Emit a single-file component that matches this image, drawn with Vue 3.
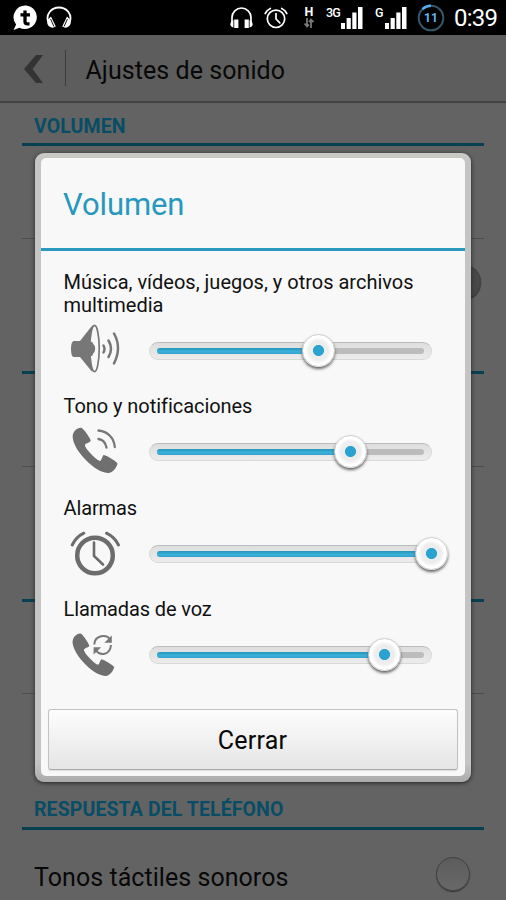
<script setup>
const channels = [
  { name: 'Música, vídeos, juegos, y otros archivos multimedia', icon: 'speaker', level: 59.7, spacing: 'wide' },
  { name: 'Tono y notificaciones', icon: 'ring', level: 71.2, spacing: 'tight' },
  { name: 'Alarmas', icon: 'alarm', level: 99.7, spacing: 'tighter' },
  { name: 'Llamadas de voz', icon: 'call', level: 83.1, spacing: 'tighter' },
]
const handset = 'M9.2 7.8C6.5 8.8 3.8 11.5 3.4 15.6C3 19.8 6.4 29.4 16 39C25 48 31.2 51.6 38.4 52.4C43.3 52.9 47.2 47 48.2 43.2C48.2 41.6 37.6 35.2 34.6 34.6C33.4 34.4 32.6 39.2 31.2 40.3C29.2 41.8 14.4 27 15.7 24.2C16.5 22.5 21.5 21.7 21.4 20.2C21.1 17.8 15.2 9.4 12.8 7.7C11.7 6.9 10.4 7.3 9.2 7.8Z'
</script>

<template>
  <div class="screen">
    <header class="status">
      <svg class="chat" viewBox="0 0 25 26">
        <path d="M13 .5A11.800 11.800 0 1 1 6.500 22.700L.5 25L3.100 19.500A11.800 11.800 0 0 1 13 .5Z" fill="#fff" />
        <path d="M12 5.500v11q0 2.400 2.300 2.400h2.200M7.500 9.800h9.500" fill="none" stroke="#000" stroke-width="3.300" />
      </svg>
      <svg class="music" viewBox="0 0 26 23">
        <path d="M2.200 16C-.5 8 5.500 1.500 13 1.500S26.500 8 23.800 16" fill="none" stroke="#fff" stroke-width="1.800" />
        <path d="M5 10.500L9.800 20.500L7 21.800C2 21 0 17.500 2 13.500ZM21 10.500L16.200 20.500L19 21.800C24 21 26 17.500 24 13.500Z" fill="#fff" />
        <path d="M4.600 13l3.300 7.500M21.400 13l-3.300 7.500" stroke="#000" stroke-width=".9" />
      </svg>
      <span class="grow"></span>
      <svg class="phones" viewBox="0 0 23 22">
        <path d="M2 15V10.500A9.500 9.500 0 0 1 21 10.500V15" fill="none" stroke="#fff" stroke-width="1.700" />
        <path d="M4.200 12.500h4.200v8.500H4.200ZM18.800 12.500h-4.200v8.500h4.200ZM3.400 13v7.500Q.3 19.500.3 17T3.400 13ZM19.600 13v7.500Q22.700 19.500 22.700 17T19.600 13Z" fill="#fff" />
      </svg>
      <svg class="clock" viewBox="0 0 24 22" fill="none" stroke="#fff" stroke-width="1.700" stroke-linecap="round">
        <circle cx="12" cy="11.800" r="8.700" />
        <path d="M12 6.500v5.500l3.800 3.800M1.200 6.500Q3 3 6.300 1.500M22.800 6.500Q21 3 17.700 1.500" />
      </svg>
      <div class="data">
        <b>H</b>
        <svg viewBox="0 0 10 10" fill="none" stroke="#777" stroke-width="1.800"><path d="M3 0v8M.5 5.500L3 8.500L5 6.500M7 10V1.500M5 4L7 1.500L9.500 4" /></svg>
      </div>
      <div class="signal"><b>3G</b><svg viewBox="0 0 22 22" fill="#fff"><path d="M0 16h4v6H0zM5.600 11h4.200v11H5.600zM11.300 5.500h4.200V22h-4.200zM17 0h4.500v22H17z" /></svg></div>
      <div class="signal second"><b>G</b><svg viewBox="0 0 22 22" fill="#fff"><path d="M0 16h4v6H0zM5.600 11h4.200v11H5.600zM11.300 5.500h4.200V22h-4.200zM17 0h4.500v22H17z" /></svg></div>
      <div class="battery">
        <svg viewBox="0 0 28 28" fill="none"><circle cx="14" cy="14" r="12.300" stroke="#36566a" stroke-width="2" /><path d="M5.500 5.100A12.300 12.300 0 0 1 14 1.700" stroke="#58aef0" stroke-width="2.500" /></svg>
        <b>11</b>
      </div>
      <span class="time">0:39</span>
    </header>

    <nav class="bar">
      <svg class="back" viewBox="0 0 20 28"><path d="M12 0h7L8.500 14L19 28h-7L0 14Z" fill="#333" /></svg>
      <i class="divider"></i>
      <span class="title">Ajustes de sonido</span>
    </nav>

    <main class="list">
      <h2 class="section">VOLUMEN</h2>
      <div class="item first"></div>
      <div class="item tall"><span class="switch dark"></span></div>
      <div class="item short"></div>
      <div class="item tall"></div>
      <div class="item narrow"></div>
      <div class="item gap"></div>
      <h2 class="section lower">RESPUESTA DEL TELÉFONO</h2>
      <div class="option"><span>Tonos táctiles sonoros</span><span class="switch"></span></div>
    </main>

    <section class="dialog">
      <div class="panel">
        <h1>Volumen</h1>
        <div class="channels">
          <div v-for="c in channels" :key="c.name" class="channel">
            <p :class="c.spacing">{{ c.name }}</p>
            <div class="control">
              <svg class="icon" :class="c.icon" viewBox="0 0 52 60">
                <g v-if="c.icon === 'speaker'">
                  <path d="M4.500 22H11L22 8Q26.500 3 29 15V42Q27 56 22 51.500L11 38H4.500Q2 37 2 30T4.500 22Z" fill="#777" />
                  <ellipse cx="25.500" cy="29.500" rx="4.700" ry="23.200" fill="#f8f8f8" stroke="#777" stroke-width="1.700" />
                  <path d="M21 22.500q3 0 3.200 2.500q2.300 1.500 2 5t-2.200 4.800q0 2.500-3 2.500Z" fill="#777" />
                  <path d="M34.500 26.500q2 3.500 0 7M39.500 21.500q5 8 0 16.500M45 14.500q8 14 0 30" fill="none" stroke="#777" stroke-width="2.500" stroke-linecap="round" />
                </g>
                <g v-else-if="c.icon === 'alarm'" fill="none" stroke="#6c6c6c" stroke-linecap="round">
                  <circle cx="26" cy="31.500" r="17.800" stroke-width="4.500" />
                  <path d="M25 18.500V32l9 8.500" stroke-width="2.600" />
                  <path d="M3.200 21Q7 13 14.800 9.200M49.500 21Q45.500 13 37.500 9.200" stroke-width="3" />
                </g>
                <g v-else>
                  <path :d="handset" :transform="c.icon === 'call' ? 'translate(.4 .7) scale(.93 .94)' : 'translate(.3 .5)'" fill="#6f6f6f" />
                  <g v-if="c.icon === 'ring'" fill="none" stroke="#777" stroke-width="2.300" stroke-linecap="round">
                    <path d="M29.500 19Q36 20 37.500 27.500M29.500 10.500C39 11.500 45 18 45.800 27" />
                  </g>
                  <g v-else>
                    <path d="M25.300 18.500C25.800 9 37.500 7.800 41.200 13.500M42 19C41 29.500 31 30 27 24.500" fill="none" stroke="#777" stroke-width="2" />
                    <path d="M42.800 9.500v7.200h-7.500ZM24.600 28.500v-7.200h7.500Z" fill="#777" />
                  </g>
                </g>
              </svg>
              <div class="slider">
                <div class="groove"><div class="fill" :style="{ width: c.level + '%' }"></div></div>
                <div class="rail"><div class="thumb" :style="{ left: c.level + '%' }"></div></div>
              </div>
            </div>
          </div>
        </div>
        <button>Cerrar</button>
      </div>
    </section>
  </div>
</template>

<style>
body { margin: 0; background: #636363; }
</style>

<style scoped>
* { box-sizing: border-box; }
.screen { position: relative; width: 506px; height: 900px; overflow: hidden; background: #636363; font-family: Roboto, "Liberation Sans", sans-serif; color: #080808; }
h1, h2, p { margin: 0; font-weight: 400; }
svg { display: block; flex: none; }
.status { height: 35px; background: #000; color: #fff; display: flex; align-items: center; padding: 0 9px 0 13px; }
.chat { width: 25px; height: 26px; }
.music { width: 26px; height: 23px; margin-left: 8px; }
.grow { flex: 1; }
.phones { width: 23px; height: 22px; margin-right: 11px; }
.clock { width: 24px; height: 22px; margin-right: 14px; }
.data { width: 14px; margin-right: 10px; display: flex; flex-direction: column; align-items: center; gap: 1px; font-size: 12.500px; line-height: 10px; }
.data svg { width: 10px; height: 10px; }
.signal { display: flex; align-items: flex-start; width: 37px; justify-content: space-between; }
.signal b { font-size: 12.500px; line-height: 11px; font-weight: 500; letter-spacing: -.8px; }
.signal svg { width: 22px; height: 22px; }
.second { width: 32px; margin-left: 12px; }
.battery { width: 28px; height: 28px; margin-left: 10px; display: grid; place-items: center; color: #66b7ef; font-size: 12px; }
.battery > * { grid-area: 1 / 1; }
.battery svg { width: 28px; height: 28px; }
.time { width: 43px; margin-left: 9px; font-size: 24px; white-space: nowrap; letter-spacing: -.8px; }
.bar { height: 68px; background: #5d5d5d; border-bottom: 2px solid #434343; display: flex; align-items: center; padding-left: 24px; }
.back { width: 20px; height: 28px; margin-top: 2px; }
.divider { width: 1px; height: 36px; margin-left: 21px; background: #3c3c3c; }
.title { margin-left: 19.500px; padding-top: 4px; font-size: 25px; letter-spacing: .06px; white-space: nowrap; }
.list { padding: 0 22px; }
.section { height: 43px; border-bottom: 3px solid #073f53; padding: 13px 12px 0; font-size: 19.500px; line-height: 22px; font-weight: 700; letter-spacing: .1px; color: #084d65; white-space: nowrap; }
.item { border-bottom: 1px solid #4d4d4d; padding: 0 2px; display: flex; justify-content: flex-end; }
.first, .short { height: 93px; }
.tall { height: 135px; border-bottom: 3px solid #073f53; padding-top: 26px; }
.narrow { height: 92px; }
.gap { height: 101px; border: 0; }
.section.lower { height: 35px; padding-top: 4px; }
.option { display: flex; justify-content: space-between; align-items: center; padding: 0 14px 0 12px; height: 95px; font-size: 25px; letter-spacing: .05px; white-space: nowrap; }
.switch { width: 34px; height: 34px; border-radius: 50%; border: 1.500px solid #424242; background: linear-gradient(#5c5c5c, #686868); box-shadow: 0 1px 1px #333; }
.option .switch { margin-bottom: 8px; }
.tall .dark { width: 32px; margin-right: 1px; background: #484848; }
.dialog { position: absolute; left: 35px; top: 153px; width: 436px; height: 629px; padding: 5px 6px 6px; border-radius: 9px; background: linear-gradient(#c9cac4, #c4c4c4 10px, #c4c4c4 610px, #aaa); box-shadow: 0 1px 4px #222; }
.panel { height: 618px; border-radius: 5px; background: #f8f8f8; display: flex; flex-direction: column; }
h1 { height: 93px; flex: none; border-bottom: 3px solid #2b98bd; padding: 27px 22px 0; font-size: 31px; line-height: 40px; color: #2798bd; letter-spacing: -.1px; }
.channels { flex: 1; padding: 20px 22.500px 0; }
p { font-size: 20px; line-height: 23px; color: #111; }
.wide { letter-spacing: 0; }
.tight { letter-spacing: -.05px; }
.tighter { letter-spacing: -.12px; }
.control { height: 78.300px; display: flex; align-items: flex-start; padding-left: 5.500px; }
.icon { width: 52px; height: 60px; margin-top: 2px; }
.icon.alarm { margin-top: 4px; }
.icon.call { margin-top: 5px; }
.slider { margin: 25px 0 0 28px; width: 283px; height: 18px; border-radius: 9px; padding: 5px 7px; background: linear-gradient(#dedede, #ececec); border: 1px solid #d8d8d4; border-top-color: #b9bcbc; display: grid; }
.slider > * { grid-area: 1 / 1; }
.groove { height: 6px; border-radius: 3px; background: #bcbcbc; overflow: hidden; }
.fill { height: 6px; background: linear-gradient(#2696ba, #3bb0da 60%, #32a2cd); }
.rail { position: relative; height: 6px; margin-right: -8px; margin-left: -7px; }
.thumb { position: absolute; top: -14px; width: 33px; height: 33px; margin-left: -16.500px; border-radius: 50%; background: radial-gradient(circle, #2ba3d1 0 5.200px, transparent 5.900px), radial-gradient(circle, #ededed 0 9px, #f3f3f3 11px, #fff 13px); border: 1px solid #cfcfcf; box-shadow: 0 2px 3px #666; }
button { height: 61px; margin: 0 7px 6px; border: 1px solid #c2c2c2; border-bottom-color: #aaa; border-radius: 3px; background: linear-gradient(#fdfdfd, #e5e5e5); font: 25px Roboto, sans-serif; color: #080808; padding: 2px 1px 0 0; box-shadow: 0 1px 1px #ddd; letter-spacing: .2px; }
</style>
